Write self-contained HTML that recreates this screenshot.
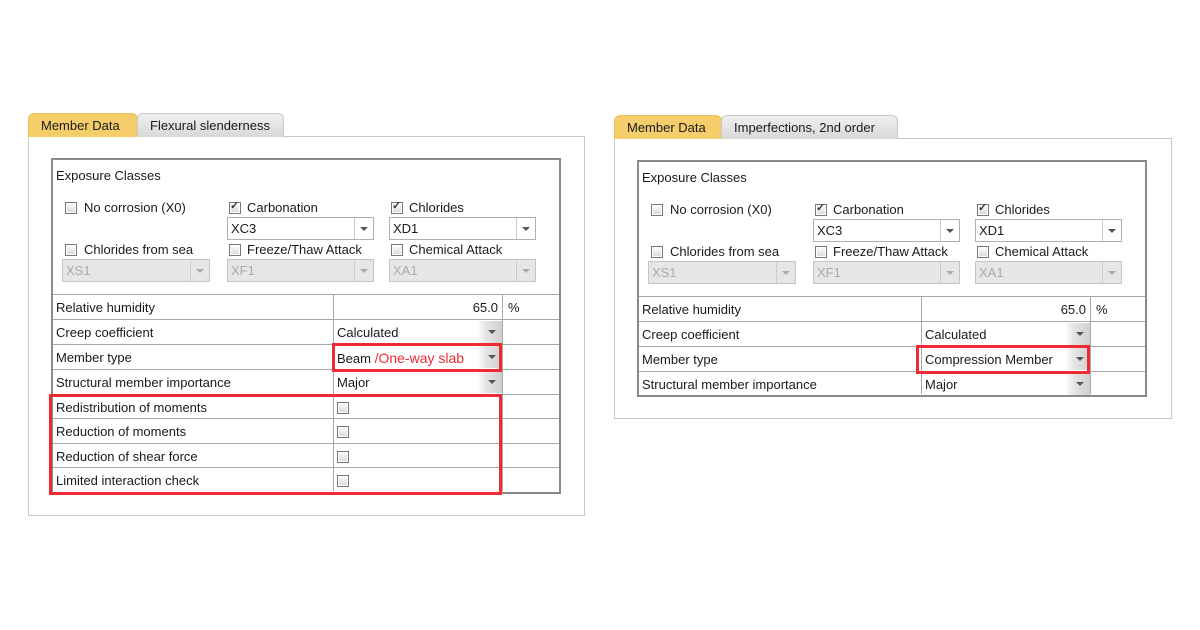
<!DOCTYPE html>
<html><head><style>
body{margin:0;width:1200px;height:630px;background:#fff;font-family:"Segoe UI","Liberation Sans",sans-serif;font-size:13px;color:#1a1a1a;position:relative;overflow:hidden}
.panel{position:absolute;border:1px solid #c8c8c8;background:#fff}
.tab{position:absolute;top:-24px;height:23px;line-height:23px;padding:0 12px;border:1px solid #c8c8c8;border-bottom:none;border-radius:6px 6px 0 0;background:linear-gradient(#f0f0f0,#d9d9d9);font-size:13px}
.tab.on{background:#f5cd6b;border-color:#e8c060}
.grp{position:absolute;left:22px;top:21px;width:506px;border:2px solid #8a8a8a;background:#fff}
.cb{position:absolute;width:10px;height:10px;border:1px solid #777;background:linear-gradient(#fdfdfd,#d8d8d8);box-shadow:inset 0 0 0 1px #fff}
.cb.ck::after{content:"✓";position:absolute;left:0;top:-4px;font-size:11px;font-weight:bold;color:#333}
.lbl{position:absolute;line-height:16px}
.combo{position:absolute;height:21px;border:1px solid #b0b0b0;background:#fff;line-height:21px;padding-left:3px}
.combo.dis{background:#e6e6e6;color:#aaa;border-color:#c4c4c4}
.combo .ar{position:absolute;right:0;top:0;width:18px;height:21px;border-left:1px solid #ccc}
.combo .ar::after{content:"";position:absolute;left:5px;top:9px;border:4px solid transparent;border-top:4px solid #555}
.combo.dis .ar::after{border-top-color:#aaa}
.row{position:absolute;left:0;width:506px;height:24px;border-top:1px solid #a8a8a8}
.row .c1{position:absolute;left:3px;top:1px;line-height:24px}
.row .c2{position:absolute;left:280px;top:0;width:168px;height:24px;border-left:1px solid #a8a8a8;border-right:1px solid #a8a8a8}
.row .v{position:absolute;left:3px;top:1px;line-height:24px}
.dd{position:absolute;left:0;top:1px;width:168px;height:22px;background:linear-gradient(90deg,#fff 85%,#e6e6e6 90%,#cfcfcf)}
.dd::after{content:"";position:absolute;right:6px;top:9px;border:4px solid transparent;border-top:4px solid #555}
.rcb{position:absolute;left:3px;top:7px}
.red{position:absolute;border:3px solid #ee2b33}
</style></head><body>

<!-- LEFT -->
<div class="panel" style="left:28px;top:136px;width:555px;height:378px">
 <div class="tab on" style="left:-1px;width:84px">Member Data</div>
 <div class="tab" style="left:108px;width:121px">Flexural slenderness</div>
 <div class="grp" style="height:332px">
  <div class="lbl" style="left:3px;top:8px">Exposure Classes</div>
  <div class="cb" style="left:12px;top:42px"></div><div class="lbl" style="left:31px;top:40px">No corrosion (X0)</div>
  <div class="cb ck" style="left:176px;top:42px"></div><div class="lbl" style="left:194px;top:40px">Carbonation</div>
  <div class="cb ck" style="left:338px;top:42px"></div><div class="lbl" style="left:356px;top:40px">Chlorides</div>
  <div class="combo" style="left:174px;top:57px;width:142px">XC3<div class="ar"></div></div>
  <div class="combo" style="left:336px;top:57px;width:142px">XD1<div class="ar"></div></div>
  <div class="cb" style="left:12px;top:84px"></div><div class="lbl" style="left:31px;top:82px">Chlorides from sea</div>
  <div class="cb" style="left:176px;top:84px"></div><div class="lbl" style="left:194px;top:82px">Freeze/Thaw Attack</div>
  <div class="cb" style="left:338px;top:84px"></div><div class="lbl" style="left:356px;top:82px">Chemical Attack</div>
  <div class="combo dis" style="left:9px;top:99px;width:143px">XS1<div class="ar"></div></div>
  <div class="combo dis" style="left:174px;top:99px;width:142px">XF1<div class="ar"></div></div>
  <div class="combo dis" style="left:336px;top:99px;width:142px">XA1<div class="ar"></div></div>
  <div class="row" style="top:134px"><span class="c1">Relative humidity</span><div class="c2"><span class="v" style="left:auto;right:4px">65.0</span></div><span class="v" style="left:455px">%</span></div>
  <div class="row" style="top:159px"><span class="c1">Creep coefficient</span><div class="c2"><div class="dd"></div><span class="v">Calculated</span></div></div>
  <div class="row" style="top:184px"><span class="c1">Member type</span><div class="c2"><div class="dd"></div><span class="v">Beam <span style="color:#ee2b33;font-size:14px">/One-way slab</span></span></div></div>
  <div class="row" style="top:209px"><span class="c1">Structural member importance</span><div class="c2"><div class="dd"></div><span class="v">Major</span></div></div>
  <div class="row" style="top:234px"><span class="c1">Redistribution of moments</span><div class="c2"><div class="cb rcb"></div></div></div>
  <div class="row" style="top:258px"><span class="c1">Reduction of moments</span><div class="c2"><div class="cb rcb"></div></div></div>
  <div class="row" style="top:283px"><span class="c1">Reduction of shear force</span><div class="c2"><div class="cb rcb"></div></div></div>
  <div class="row" style="top:307px;height:23px"><span class="c1">Limited interaction check</span><div class="c2" style="height:23px"><div class="cb rcb"></div></div></div>
 </div>
</div>
<div class="red" style="left:332px;top:343px;width:164px;height:23px"></div>
<div class="red" style="left:49px;top:394px;width:447px;height:95px"></div>

<!-- RIGHT -->
<div class="panel" style="left:614px;top:138px;width:556px;height:279px">
 <div class="tab on" style="left:-1px;width:82px">Member Data</div>
 <div class="tab" style="left:106px;width:151px">Imperfections, 2nd order</div>
 <div class="grp" style="height:233px">
  <div class="lbl" style="left:3px;top:8px">Exposure Classes</div>
  <div class="cb" style="left:12px;top:42px"></div><div class="lbl" style="left:31px;top:40px">No corrosion (X0)</div>
  <div class="cb ck" style="left:176px;top:42px"></div><div class="lbl" style="left:194px;top:40px">Carbonation</div>
  <div class="cb ck" style="left:338px;top:42px"></div><div class="lbl" style="left:356px;top:40px">Chlorides</div>
  <div class="combo" style="left:174px;top:57px;width:142px">XC3<div class="ar"></div></div>
  <div class="combo" style="left:336px;top:57px;width:142px">XD1<div class="ar"></div></div>
  <div class="cb" style="left:12px;top:84px"></div><div class="lbl" style="left:31px;top:82px">Chlorides from sea</div>
  <div class="cb" style="left:176px;top:84px"></div><div class="lbl" style="left:194px;top:82px">Freeze/Thaw Attack</div>
  <div class="cb" style="left:338px;top:84px"></div><div class="lbl" style="left:356px;top:82px">Chemical Attack</div>
  <div class="combo dis" style="left:9px;top:99px;width:143px">XS1<div class="ar"></div></div>
  <div class="combo dis" style="left:174px;top:99px;width:142px">XF1<div class="ar"></div></div>
  <div class="combo dis" style="left:336px;top:99px;width:142px">XA1<div class="ar"></div></div>
  <div class="row" style="top:134px"><span class="c1">Relative humidity</span><div class="c2" style="left:282px"><span class="v" style="left:auto;right:4px">65.0</span></div><span class="v" style="left:457px">%</span></div>
  <div class="row" style="top:159px"><span class="c1">Creep coefficient</span><div class="c2" style="left:282px"><div class="dd"></div><span class="v">Calculated</span></div></div>
  <div class="row" style="top:184px"><span class="c1">Member type</span><div class="c2" style="left:282px"><div class="dd"></div><span class="v">Compression Member</span></div></div>
  <div class="row" style="top:209px;height:22px"><span class="c1">Structural member importance</span><div class="c2" style="left:282px;height:22px"><div class="dd"></div><span class="v">Major</span></div></div>
 </div>
</div>
<div class="red" style="left:916px;top:345px;width:168px;height:23px"></div>
</body></html>
